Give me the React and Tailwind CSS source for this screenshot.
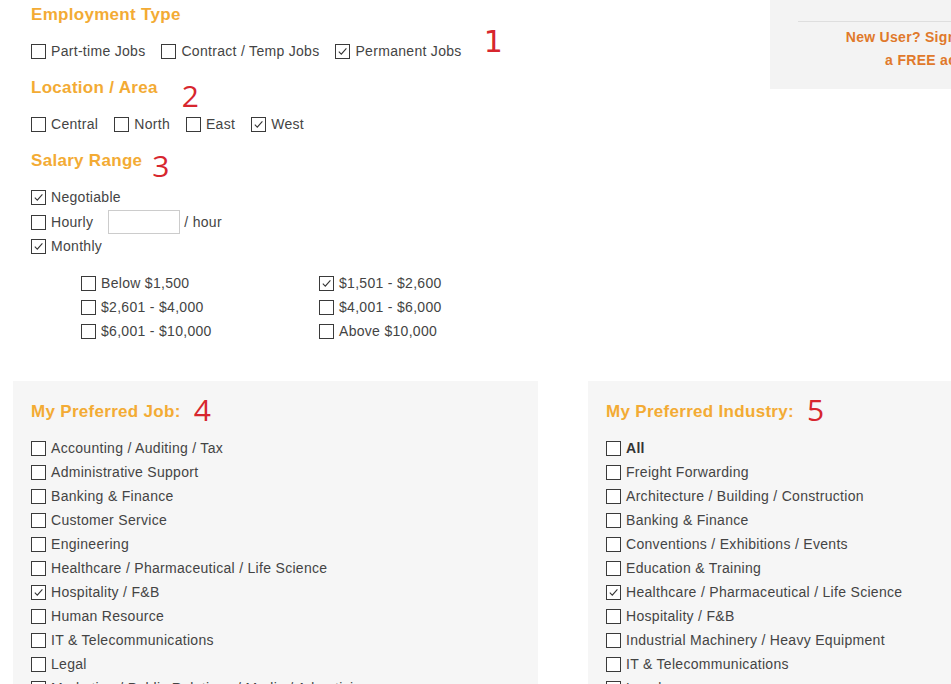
import React from 'react';

const heading = 'text-[17px] leading-5 font-bold text-[#f3ab34] tracking-[0.3px]';
const mark = "text-[30px] leading-none text-[#d7262e] font-['Open_Sans',sans-serif]";

const Box = ({ checked }) => (
  <span className="w-[15px] h-[15px] border border-[#3a3a3a] bg-white flex items-center justify-center shrink-0">
    {checked && (
      <svg width="11" height="11" viewBox="0 0 11 11">
        <path d="M1.8 5.6 L4.3 8.1 L9.4 2.4" fill="none" stroke="#333" strokeWidth="1.1" />
      </svg>
    )}
  </span>
);

const Check = ({ label, checked, bold }) => (
  <label className="flex items-center gap-[5px] h-6">
    <Box checked={checked} />
    <span className={bold ? 'font-bold text-[#333]' : ''}>{label}</span>
  </label>
);

const jobs = [
  ['Accounting / Auditing / Tax'],
  ['Administrative Support'],
  ['Banking & Finance'],
  ['Customer Service'],
  ['Engineering'],
  ['Healthcare / Pharmaceutical / Life Science'],
  ['Hospitality / F&B', true],
  ['Human Resource'],
  ['IT & Telecommunications'],
  ['Legal'],
  ['Marketing / Public Relations / Media / Advertising'],
];

const industries = [
  ['Freight Forwarding'],
  ['Architecture / Building / Construction'],
  ['Banking & Finance'],
  ['Conventions / Exhibitions / Events'],
  ['Education & Training'],
  ['Healthcare / Pharmaceutical / Life Science', true],
  ['Hospitality / F&B'],
  ['Industrial Machinery / Heavy Equipment'],
  ['IT & Telecommunications'],
  ['Legal'],
];

const salaries = [
  ['Below $1,500'],
  ['$1,501 - $2,600', true],
  ['$2,601 - $4,000'],
  ['$4,001 - $6,000'],
  ['$6,001 - $10,000'],
  ['Above $10,000'],
];

export default function App() {
  return (
    <div className="w-[951px] h-[684px] overflow-hidden bg-white text-[14px] tracking-[0.3px] text-[#444] font-['Liberation_Sans',Arial,sans-serif]">
      {/* Top filters + sign-up box */}
      <div className="flex">
        <div className="w-[770px] shrink-0 pl-[31px] pt-[5px]">
          <h3 className={heading}>Employment Type</h3>
          <div className="flex items-center gap-4 mt-[14px]">
            <Check label="Part-time Jobs" />
            <Check label="Contract / Temp Jobs" />
            <Check label="Permanent Jobs" checked />
            <span className="text-[30px] leading-none text-[#d7262e] font-['DejaVu_Sans',sans-serif] tracking-normal ml-[6px] -mt-[18px]">1</span>
          </div>

          <div className="flex items-start mt-[15px] h-5">
            <h3 className={heading}>Location / Area</h3>
            <span className={`${mark} ml-[24px] mt-[3px]`}>2</span>
          </div>
          <div className="flex items-center gap-4 mt-[14px]">
            <Check label="Central" />
            <Check label="North" />
            <Check label="East" />
            <Check label="West" checked />
          </div>

          <div className="flex items-start mt-[15px] h-5">
            <h3 className={heading}>Salary Range</h3>
            <span className={`${mark} ml-[10px] mt-0`}>3</span>
          </div>
          <div className="mt-[14px]">
            <Check label="Negotiable" checked />
            <div className="flex items-center mt-px h-6">
              <Check label="Hourly" />
              <input className="ml-[15px] w-[72px] h-6 border border-[#ccc] bg-white outline-none" />
              <span className="ml-1">/ hour</span>
            </div>
            <Check label="Monthly" checked />
          </div>
          <div className="grid grid-cols-[238px_200px] ml-[50px] mt-[13px]">
            {salaries.map(([l, c]) => (
              <Check key={l} label={l} checked={c} />
            ))}
          </div>
        </div>

        <div className="w-[313px] shrink-0 h-[89px] bg-[#f3f3f3] self-start">
          <div className="ml-[28px] mt-[21px] border-t border-[#dedede] pt-[4px] text-center font-bold text-[#e0792b] leading-[23px]">
            <div>New User? Sign up now for</div>
            <div>a FREE account</div>
          </div>
        </div>
      </div>

      {/* Preference panels */}
      <div className="flex mt-[38px]">
        <div className="ml-[13px] w-[525px] shrink-0 bg-[#f6f6f6] pt-[21px] pl-[18px] pb-6">
          <div className="flex items-start h-5">
            <h3 className={heading}>My Preferred Job:</h3>
            <span className={`${mark} ml-[13px] mt-[-7px]`}>4</span>
          </div>
          <div className="mt-[14px]">
            {jobs.map(([l, c]) => (
              <Check key={l} label={l} checked={c} />
            ))}
          </div>
        </div>

        <div className="ml-[50px] w-[400px] shrink-0 bg-[#f6f6f6] pt-[21px] pl-[18px] pb-6">
          <div className="flex items-start h-5">
            <h3 className={heading}>My Preferred Industry:</h3>
            <span className={`${mark} ml-[13px] mt-[-7px]`}>5</span>
          </div>
          <div className="mt-[14px]">
            <Check label="All" bold />
            {industries.map(([l, c]) => (
              <Check key={l} label={l} checked={c} />
            ))}
          </div>
        </div>
      </div>
    </div>
  );
}
